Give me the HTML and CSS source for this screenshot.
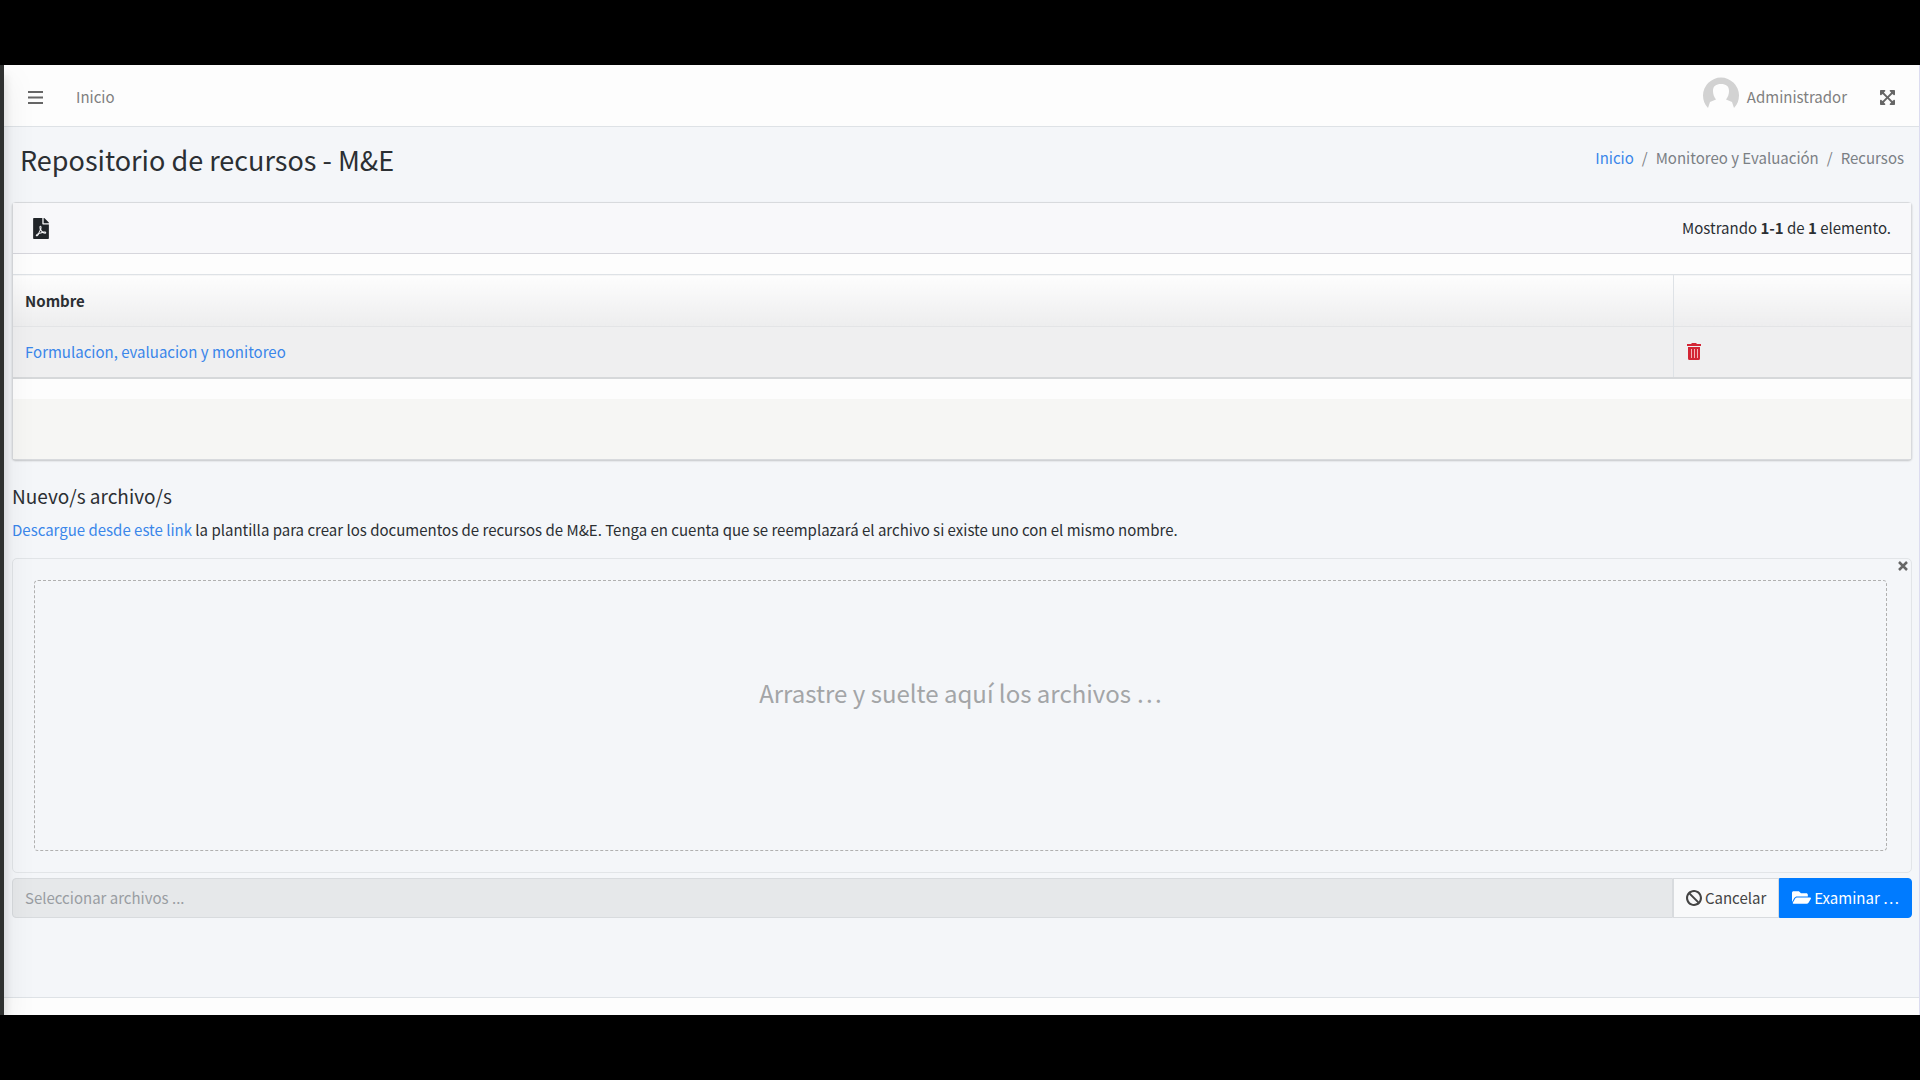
FILE: index.html
```html
<!DOCTYPE html>
<html lang="es">
<head>
    <meta charset="UTF-8">
    <meta name="viewport" content="width=device-width, initial-scale=1.0">
    <title>Repositorio de recursos - M&amp;E</title>
    <link rel="stylesheet" href="styles.css">
</head>
<body>
    <div class="wrapper">
        <aside class="sidebar"></aside>
        <div class="page">
            <nav class="navbar">
                <button type="button" class="icon-btn" aria-label="Menú">
                    <svg class="icon-bars" viewBox="0 0 15 13"><path d="M0 1h15M0 6.500h15M0 12h15" stroke="currentColor" stroke-width="2"/></svg>
                </button>
                <a href="#" class="nav-link">Inicio</a>
                <a href="#" class="nav-link user">
                    <svg class="avatar" viewBox="0 0 36 36">
                        <path fill="#d2d2d2" d="M5 31A18 18 0 1 1 31 31L29 25 23 22.500C25 20 26 17 26 14 26 9 23 7 18 7S10 9 10 14C10 17 11 20 13 22.500L7 25Z"/>
                    </svg>
                    Administrador
                </a>
                <button type="button" class="icon-btn" aria-label="Pantalla completa">
                    <svg class="icon-expand" viewBox="0 32 448 448"><path fill="currentColor" d="M448 344v112a23.940 23.940 0 0 1-24 24H312c-21.390 0-32.090-25.900-17-41l36.200-36.200L224 295.600 116.770 402.900 153 439c15.090 15.100 4.390 41-17 41H24a23.940 23.940 0 0 1-24-24V344c0-21.400 25.890-32.100 41-17l36.190 36.200L184.460 256 77.180 148.700 41 185c-15.100 15.100-41 4.400-41-17V56a23.940 23.940 0 0 1 24-24h112c21.390 0 32.090 25.900 17 41l-36.200 36.200L224 216.400l107.230-107.300L295 73c-15.090-15.100-4.390-41 17-41h112a23.940 23.940 0 0 1 24 24v112c0 21.400-25.890 32.100-41 17l-36.190-36.200L263.540 256l107.280 107.300L407 327.100c15.100-15.200 41-4.500 41 16.900z"/></svg>
                </button>
            </nav>

            <header class="content-header">
                <h1>Repositorio de recursos - M&amp;E</h1>
                <ol class="breadcrumb">
                    <li><a href="#">Inicio</a></li>
                    <li>Monitoreo y Evaluación</li>
                    <li>Recursos</li>
                </ol>
            </header>

            <main class="content">
                <section class="card">
                    <div class="card-header">
                        <button type="button" class="icon-btn dark" aria-label="Exportar PDF">
                            <svg class="icon-pdf" viewBox="0 0 384 512"><path fill="currentColor" d="M181.900 256.100c-5-16-4.900-46.900-2-46.900 8.400 0 7.600 36.900 2 46.900zm-1.700 47.200c-7.700 20.200-17.300 43.300-28.400 62.700 18.300-7 39-17.200 62.900-21.900-12.700-9.600-24.900-23.400-34.500-40.800zM86.100 428.100c0 .8 13.200-5.400 34.900-40.200-6.700 6.300-29.100 24.500-34.900 40.200zM248 160h136v328c0 13.300-10.700 24-24 24H24c-13.300 0-24-10.700-24-24V24C0 10.700 10.700 0 24 0h200v136c0 13.200 10.800 24 24 24zm-8 171.800c-20-12.200-33.300-29-42.700-53.800 4.500-18.500 11.600-46.600 6.200-64.200-4.700-29.400-42.400-26.500-47.800-6.800-5 18.300-.4 44.100 8.100 77-11.600 27.600-28.700 64.600-40.800 85.800-.1 0-.1.1-.2.1-27.100 13.900-73.600 44.500-54.500 68 5.600 6.900 16 10 21.500 10 17.900 0 35.700-18 61.100-61.800 25.800-8.500 54.100-19.100 79-23.200 21.700 11.800 47.100 19.500 64 19.500 29.200 0 31.200-32 19.700-43.400-13.900-13.600-54.300-9.700-73.600-7.200zM377 105L279 7c-4.500-4.500-10.600-7-17-7h-6v128h128v-6.100c0-6.300-2.500-12.400-7-16.900zm-74.100 255.300c4.100-2.700-2.500-11.900-42.800-9 37.100 15.800 42.800 9 42.800 9z"/></svg>
                        </button>
                        <div class="summary">Mostrando <b>1-1</b> de <b>1</b> elemento.</div>
                    </div>
                    <table class="grid">
                        <thead>
                            <tr><th>Nombre</th><th class="actions"></th></tr>
                        </thead>
                        <tbody>
                            <tr>
                                <td><a href="#">Formulacion, evaluacion y monitoreo</a></td>
                                <td class="actions">
                                    <button type="button" class="icon-btn danger" aria-label="Eliminar">
                                        <svg class="icon-trash" viewBox="0 0 14 17"><path fill="currentColor" d="M4.500 0h5v1H14v2H0V1h4.500zM1 4h12v11.500q0 1.500-1.500 1.500h-9Q1 17 1 15.500z"/><path stroke="#f3b5b8" d="M4.500 6v9M7.500 6v9M10.500 6v9"/></svg>
                                    </button>
                                </td>
                            </tr>
                        </tbody>
                    </table>
                    <div class="card-footer"></div>
                </section>

                <h5>Nuevo/s archivo/s</h5>
                <p class="hint"><a href="#">Descargue desde este link</a> la plantilla para crear los documentos de recursos de M&amp;E. Tenga en cuenta que se reemplazará el archivo si existe uno con el mismo nombre.</p>

                <div class="preview">
                    <button type="button" class="icon-btn close" aria-label="Cerrar">
                        <svg class="icon-close" viewBox="0 0 10 10"><path d="M1 1l8 8M9 1L1 9" stroke="currentColor" stroke-width="2.500"/></svg>
                    </button>
                    <div class="drop-zone">Arrastre y suelte aquí los archivos …</div>
                </div>

                <div class="input-group">
                    <input type="text" class="caption" placeholder="Seleccionar archivos ..." aria-label="Seleccionar archivos" readonly>
                    <button type="button" class="btn btn-cancel">
                        <svg class="icon-ban" viewBox="8 8 496 496"><path fill="currentColor" d="M256 8C119.034 8 8 119.033 8 256s111.034 248 248 248 248-111.034 248-248S392.967 8 256 8zm130.108 117.892c65.448 65.448 70 165.481 20.677 235.637L150.470 105.216c70.204-49.356 170.226-44.735 235.638 20.676zM125.892 386.108c-65.448-65.448-70-165.481-20.677-235.637L361.530 406.784c-70.203 49.356-170.226 44.736-235.638-20.676z"/></svg>
                        Cancelar
                    </button>
                    <button type="button" class="btn btn-primary">
                        <svg class="icon-folder" viewBox="0 64 576 384"><path fill="currentColor" d="M572.694 292.093L500.270 416.248A63.997 63.997 0 0 1 444.989 448H45.025c-18.523 0-30.064-20.093-20.731-36.093l72.424-124.155A64 64 0 0 1 152 256h399.964c18.523 0 30.064 20.093 20.730 36.093zM152 224h328v-48c0-26.510-21.490-48-48-48H272l-64-64H48C21.490 64 0 85.490 0 112v278.046l69.077-118.418C86.214 242.250 117.989 224 152 224z"/></svg>
                        Examinar …
                    </button>
                </div>
            </main>

            <footer class="main-footer"></footer>
        </div>
    </div>
</body>
</html>
```
FILE: styles.css
```css
* {
    box-sizing: border-box;
}
body {
    display: flex;
    flex-direction: column;
    min-height: 100vh;
    margin: 0;
    padding: 65px 0;
    background-color: #000;
    color: #2b2f33;
    font-family: "Noto Sans CJK SC", sans-serif;
    font-size: 15px;
    line-height: 24px;
}
a {
    color: #3a86ea;
    text-decoration: none;
}
svg {
    display: block;
    fill: none;
}
.wrapper {
    display: flex;
    flex: 1;
    overflow: hidden;
    background-color: #f4f6f9;
    border-right: 1px solid #dcdcf0;
}
.sidebar {
    position: relative;
    z-index: 2;
    width: 4px;
    background-color: #2f3130;
    box-shadow: 0 14px 28px rgba(0, 0, 0, .25), 0 10px 10px rgba(0, 0, 0, .22);
}
.page {
    display: flex;
    flex: 1;
    flex-direction: column;
    min-width: 0;
}
.icon-btn {
    display: block;
    padding: 0;
    border: none;
    background: none;
    color: #666;
    cursor: pointer;
}
.dark {
    color: #212529;
}
.danger {
    color: #d32535;
}

/* Navbar */
.navbar {
    display: flex;
    align-items: center;
    height: 62px;
    padding: 3px 24px 0;
    background-color: #fdfdfd;
    border-bottom: 1px solid #dee2e6;
}
.nav-link {
    margin-left: 33px;
    color: #808080;
}
.user {
    display: flex;
    align-items: center;
    gap: 8px;
    margin-left: auto;
    margin-right: 33px;
}
.icon-bars {
    width: 15px;
    height: 13px;
}
.icon-expand {
    width: 15px;
    height: 15px;
}
.avatar {
    width: 36px;
    height: 36px;
    margin-bottom: 4px;
}

/* Content header */
.content-header {
    display: flex;
    justify-content: space-between;
    padding: 15px 15px 24px 16px;
}
h1 {
    margin: 0;
    font-size: 27px;
    font-weight: 400;
    line-height: 36px;
}
.breadcrumb {
    display: flex;
    margin: 0;
    padding: 4px 0 0;
    list-style: none;
    color: #7b8085;
    line-height: 24px;
}
.breadcrumb li + li::before {
    content: "/";
    padding: 0 8px;
}

/* Card */
.content {
    flex: 1;
    padding: 0 7px 79px 8px;
}
.card {
    background-color: #fdfdfd;
    border: 1px solid #d8dadd;
    border-radius: 4px;
    box-shadow: 0 1px 2px rgba(0, 0, 0, .2);
}
.card-header {
    display: flex;
    align-items: center;
    justify-content: space-between;
    height: 51px;
    margin-bottom: 20px;
    padding: 0 20px;
    background-color: #f8f8fa;
    border-bottom: 1px solid #d6d6dc;
}
.icon-pdf {
    width: 16px;
    height: 21px;
}
.grid {
    width: 100%;
    border-collapse: collapse;
    border-top: 1px solid #dee2e6;
    border-bottom: 2px solid #d6d8da;
}
.grid th,
.grid td {
    height: 51px;
    padding: 0 12px;
    text-align: left;
}
.grid th {
    height: 52px;
    background-image: linear-gradient(#fdfdfd, #ededee);
}
.grid td {
    background-color: #efeff0;
    border-top: 1px solid #e3e4e6;
}
.grid .actions {
    width: 238px;
    padding-left: 13px;
    border-left: 1px solid #dee2e6;
}
.icon-trash {
    width: 14px;
    height: 17px;
}
.card-footer {
    height: 60px;
    margin-top: 20px;
    background-color: #f6f6f4;
}

/* File input */
h5 {
    margin: 24px 0 10px;
    font-size: 19px;
    font-weight: 400;
    line-height: 24px;
}
.hint {
    margin: 0 0 16px;
}
.preview {
    position: relative;
    margin-bottom: 5px;
    padding: 21px 24px 21px 21px;
    border: 1px solid #e2e5e8;
    border-radius: 5px;
}
.close {
    position: absolute;
    top: 2px;
    right: 3px;
}
.icon-close {
    width: 10px;
    height: 10px;
}
.drop-zone {
    padding: 92px 16px 137px;
    border: 1px dashed #b0b0b0;
    border-radius: 4px;
    color: #a3a5a7;
    font-size: 24px;
    line-height: 40px;
    text-align: center;
}
.input-group {
    display: flex;
    height: 40px;
}
.caption {
    flex: 1;
    min-width: 0;
    padding: 0 12px;
    border: 1px solid #d8dbde;
    border-radius: 4px 0 0 4px;
    background-color: #e6e8ea;
    color: #939ba2;
    font: inherit;
}
.caption::placeholder {
    color: #999da2;
}
.btn {
    display: flex;
    align-items: center;
    gap: 3px;
    padding: 0 12px;
    border: 1px solid #d8dbde;
    font: inherit;
    white-space: nowrap;
    cursor: pointer;
}
.btn-cancel {
    background-color: #f8f9fa;
    color: #444;
}
.btn-primary {
    border-color: #007bff;
    border-radius: 0 4px 4px 0;
    background-color: #007bff;
    color: #fff;
}
.icon-ban {
    width: 16px;
    height: 16px;
}
.icon-folder {
    width: 19px;
    height: 13px;
}
.main-footer {
    height: 18px;
    background-color: #fdfdfd;
    border-top: 1px solid #dee2e6;
}
```
